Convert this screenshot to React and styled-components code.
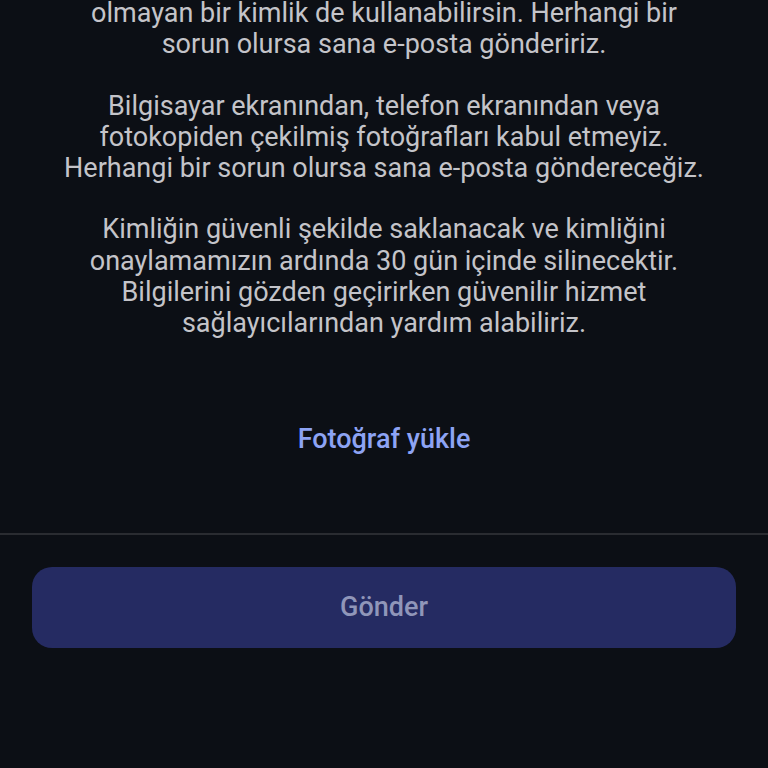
import React from "react"
import styled, { createGlobalStyle } from "styled-components"

const GlobalStyle = createGlobalStyle`
  html, body {
    margin: 0;
    padding: 0;
    background: #0c0f15;
  }
  body {
    font-family: Roboto, "Noto Sans", sans-serif;
  }
`

const paragraphs = [
  ["olmayan bir kimlik de kullanabilirsin. Herhangi bir", "sorun olursa sana e-posta göndeririz."],
  [
    "Bilgisayar ekranından, telefon ekranından veya",
    "fotokopiden çekilmiş fotoğrafları kabul etmeyiz.",
    "Herhangi bir sorun olursa sana e-posta göndereceğiz.",
  ],
  [
    "Kimliğin güvenli şekilde saklanacak ve kimliğini",
    "onaylamamızın ardında 30 gün içinde silinecektir.",
    "Bilgilerini gözden geçirirken güvenilir hizmet",
    "sağlayıcılarından yardım alabiliriz.",
  ],
]

export default function App() {
  return (
    <>
      <GlobalStyle />
      <Screen>
        <Content>
          {paragraphs.map((lines, i) => (
            <Paragraph key={i}>
              {lines.map((line, j) => (
                <Line key={j}>{line}</Line>
              ))}
            </Paragraph>
          ))}
          <LinkButton>Fotoğraf yükle</LinkButton>
        </Content>
        <Footer>
          <SubmitButton>Gönder</SubmitButton>
        </Footer>
      </Screen>
    </>
  )
}

const Screen = styled.div`
  width: 768px;
  height: 768px;
  overflow: hidden;
  background: #0c0f15;
  display: flex;
  flex-direction: column;
`

const Content = styled.div`
  display: flex;
  flex-direction: column;
  align-items: center;
  gap: 30px;
  margin-top: -2px;
  border-bottom: 2px solid #2a2c31;
  padding-bottom: 78px;
`

const Paragraph = styled.p`
  margin: 0;
  text-align: center;
  color: #c4c4c9;
  font-size: 27px;
  line-height: 31.3px;
`

const Line = styled.span`
  display: block;
  white-space: nowrap;
`

const LinkButton = styled.button`
  margin-top: 54px;
  background: none;
  border: none;
  padding: 0;
  font-family: Roboto, sans-serif;
  font-size: 27px;
  font-weight: 500;
  line-height: 31px;
  color: #8da3f4;
  cursor: pointer;
`

const Footer = styled.div`
  padding: 32px 32px 0;
`

const SubmitButton = styled.button`
  width: 100%;
  height: 81px;
  border: none;
  border-radius: 20px;
  background: #252b62;
  color: #9096b9;
  font-family: Roboto, sans-serif;
  font-size: 27px;
  font-weight: 500;
`
